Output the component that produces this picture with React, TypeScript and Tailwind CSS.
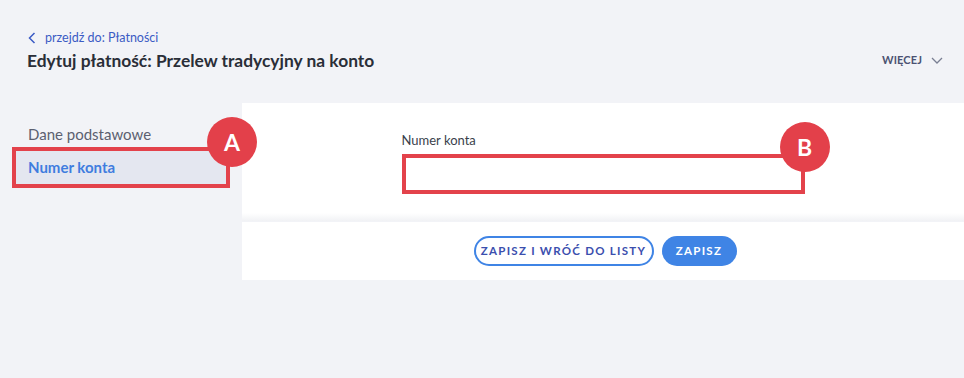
import React from "react";

const Badge: React.FC<{ letter: string; className?: string }> = ({ letter, className }) => (
  <div
    className={`absolute z-10 flex h-[50px] w-[50px] items-center justify-center rounded-full bg-[#e3404a] text-[23px] font-bold text-white ${className ?? ""}`}
  >
    {letter}
  </div>
);

export default function App() {
  return (
    <div className="h-[378px] w-[964px] overflow-hidden bg-[#f2f3f7] font-['Lato',sans-serif] text-[#2a2e38]">
      <div className="flex items-start justify-between pl-[27px] pr-[21px] pt-[29px]">
        <div>
          <a className="flex items-center gap-[9px] text-[12.5px] text-[#3b5bc4]">
            <svg width="8" height="12" viewBox="0 0 8 12" fill="none" className="ml-[1px]">
              <path d="M6.5 1 L1.5 6 L6.5 11" stroke="#3b5bc4" strokeWidth="1.5" />
            </svg>
            przejdź do: Płatności
          </a>
          <h1 className="mt-[2px] text-[17.4px] font-bold leading-[22px] text-[#2a2e38]">
            Edytuj płatność: Przelew tradycyjny na konto
          </h1>
        </div>
        <button className="mt-[23px] flex items-center gap-[9px] text-[11px] font-bold tracking-[0.01em] text-[#4b5272]">
          WIĘCEJ
          <svg width="12" height="7" viewBox="0 0 12 7" fill="none">
            <path d="M1 1 L6 6 L11 1" stroke="#7a7f93" strokeWidth="1.3" />
          </svg>
        </button>
      </div>

      <div className="mt-[31px] flex">
        <nav className="w-[242px] pt-[20px]">
          <div className="pl-[28px] text-[15px] leading-[22px] text-[#5b6070]">Dane podstawowe</div>
          <div className="relative ml-[12px] mt-[2px] flex h-[41px] w-[218px] items-center border-[4px] border-[#e3424b] bg-[#e4e7f0] pl-[12px] text-[15px] font-bold text-[#3f7ddf]">
            Numer konta
            <Badge letter="A" className="left-[191px] top-[-34px]" />
          </div>
        </nav>

        <div className="flex-1">
          <div className="relative h-[118px] bg-white">
            <div className="mx-auto w-[403px] pt-[29px]">
              <label className="block text-[13px] leading-[16px] text-[#3a3f4b]">Numer konta</label>
              <div className="relative mt-[6px] h-[40px] border-[4px] border-[#e3424b] bg-white">
                <Badge letter="B" className="right-[-29px] top-[-36px]" />
              </div>
            </div>
            <div className="absolute bottom-0 left-0 right-0 h-[8px] bg-gradient-to-b from-white to-[#f1f2f5]" />
          </div>
          <div className="mt-[1px] flex h-[58px] items-center justify-center gap-[8px] bg-white pl-[4px]">
            <button className="h-[30px] w-[180px] rounded-full border-2 border-[#3f84e5] text-[11.5px] font-bold tracking-[0.11em] text-[#3b4fae]">
              ZAPISZ I WRÓĆ DO LISTY
            </button>
            <button className="h-[30px] w-[75px] rounded-full bg-[#3f84e5] text-[11.5px] font-bold tracking-[0.11em] text-white">
              ZAPISZ
            </button>
          </div>
        </div>
      </div>
    </div>
  );
}
